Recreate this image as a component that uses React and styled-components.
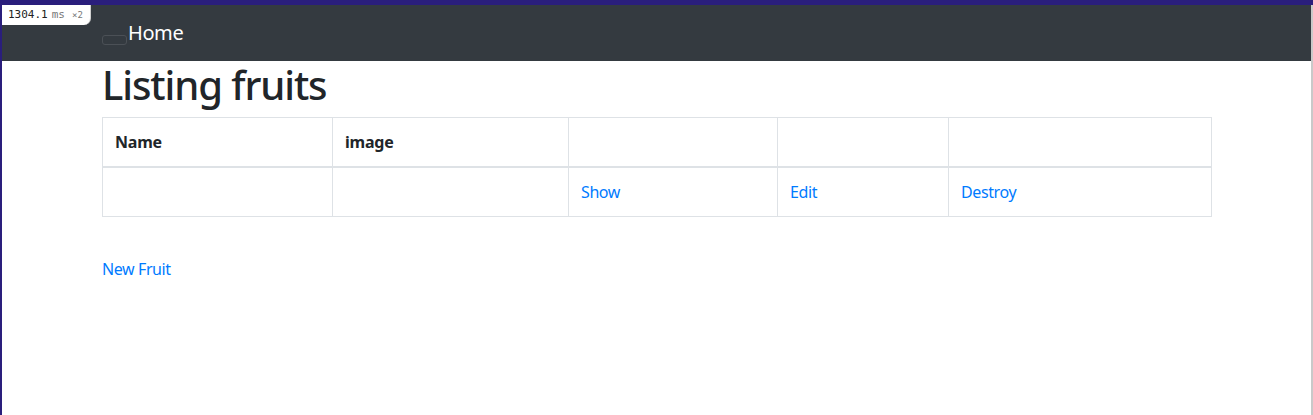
import React from "react";
import styled, { createGlobalStyle } from "styled-components";

const GlobalStyle = createGlobalStyle`
  html, body {
    margin: 0;
    padding: 0;
    background: #2a1e7c;
  }
  body {
    font-family: "Noto Sans", "Open Sans", sans-serif;
    font-size: 16px;
    line-height: 1.5;
    color: #212529;
  }
`;

const Frame = styled.div`
  position: relative;
  height: 410px;
  margin-top: 5px;
  margin-left: 2px;
  background: #fff;
  border-right: 2px solid #c9c9c9;
  overflow: hidden;
`;

const Timer = styled.div`
  position: absolute;
  top: 0;
  left: 0;
  height: 20px;
  padding: 0 7px 0 6px;
  background: #fff;
  border-bottom-right-radius: 7px;
  border-right: 1px solid #d0d0d0;
  font-family: "DejaVu Sans Mono", monospace;
  font-size: 11px;
  line-height: 20px;
  color: #222;
  display: flex;
  align-items: center;
  gap: 4px;
`;

const Unit = styled.span`
  color: #777;
  font-size: ${(p) => (p.small ? "9px" : "11px")};
  margin-left: ${(p) => (p.small ? "3px" : "0")};
`;

const Navbar = styled.nav`
  background: #343a40;
  height: 56px;
  display: flex;
  align-items: center;
  padding: 0 100px;
`;

const Toggler = styled.span`
  display: inline-block;
  width: 23px;
  height: 8px;
  margin-top: 14px;
  border: 1px solid #4b5056;
  border-radius: 3px;
`;

const Brand = styled.a`
  color: #fff;
  font-size: 20px;
  line-height: 30px;
  letter-spacing: -0.4px;
  text-decoration: none;
  margin-left: 1px;
`;

const Container = styled.main`
  width: 1110px;
  margin: 0 auto;
  padding-left: 1px;
`;

const Title = styled.h1`
  margin: 0 0 8px;
  font-size: 40px;
  font-weight: 500;
  line-height: 48px;
  letter-spacing: -1.1px;
`;

const Table = styled.table`
  width: 1110px;
  table-layout: fixed;
  border-collapse: collapse;
  margin-bottom: 16px;
`;

const Col = styled.col`
  width: ${(p) => p.w}px;
`;

const Th = styled.th`
  text-align: left;
  font-weight: 700;
  padding: 12px;
  height: 24px;
  border: 1px solid #dee2e6;
  border-bottom-width: 2px;
  letter-spacing: -0.2px;
`;

const Td = styled.td`
  padding: 12px;
  height: 24px;
  border: 1px solid #dee2e6;
`;

const Link = styled.a`
  color: #007bff;
  text-decoration: none;
  letter-spacing: -0.4px;
`;

const cols = [230, 236, 209, 171, 263];

export default function App() {
  return (
    <>
      <GlobalStyle />
      <Frame>
        <Timer>
          1304.1<Unit>ms</Unit>
          <Unit small>×2</Unit>
        </Timer>
        <Navbar>
          <Toggler />
          <Brand href="#">Home</Brand>
        </Navbar>
        <Container>
          <Title>Listing fruits</Title>
          <Table style={{ width: cols.reduce((a, b) => a + b, 0) }}>
            <colgroup>
              {cols.map((w, i) => (
                <Col key={i} w={w} />
              ))}
            </colgroup>
            <thead>
              <tr>
                <Th>Name</Th>
                <Th>image</Th>
                <Th></Th>
                <Th></Th>
                <Th></Th>
              </tr>
            </thead>
            <tbody>
              <tr>
                <Td></Td>
                <Td></Td>
                <Td>
                  <Link href="#">Show</Link>
                </Td>
                <Td>
                  <Link href="#">Edit</Link>
                </Td>
                <Td>
                  <Link href="#">Destroy</Link>
                </Td>
              </tr>
            </tbody>
          </Table>
          <br />
          <Link href="#">New Fruit</Link>
        </Container>
      </Frame>
    </>
  );
}
